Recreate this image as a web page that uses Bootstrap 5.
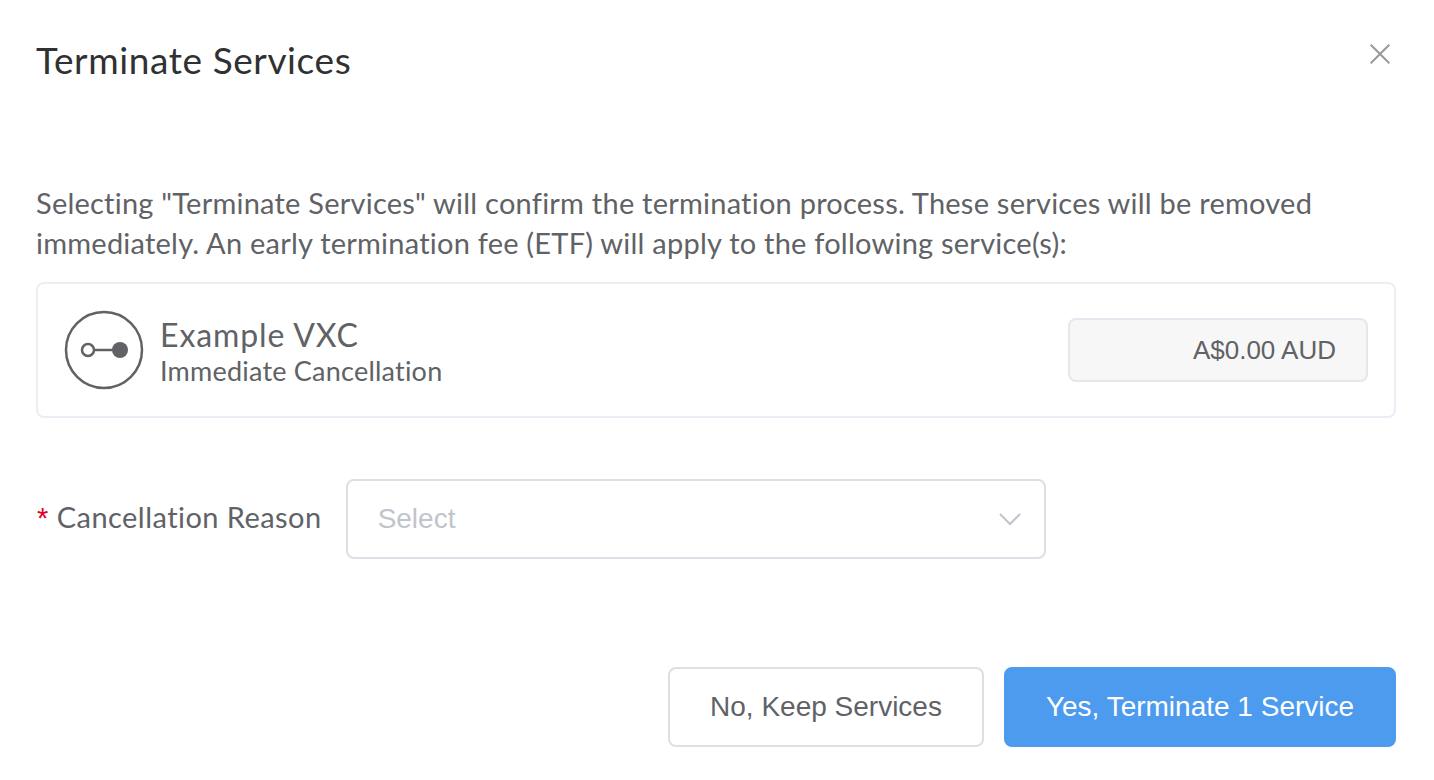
<!DOCTYPE html>
<html lang="en"><head><meta charset="utf-8"><title>Terminate Services</title>
<link rel="stylesheet" href="https://cdn.jsdelivr.net/npm/bootstrap@5.3.0/dist/css/bootstrap.min.css">
<style>
html,body{height:100%;background:#fff}
body{font-family:"Lato","Open Sans",sans-serif;color:#606266;font-size:28px;line-height:40px;overflow:hidden}
.dlg{padding:35px 38px 33px 36px;height:780px;display:flex;flex-direction:column}
.dlg-title{font-size:37px;line-height:50px;letter-spacing:.6px;color:#303133;margin:0;font-weight:400}
.dlg-close{background:none;border:0;padding:0;width:20px;height:20px;line-height:0;margin-top:9px;margin-right:6px}
.dlg-msg{margin:98px 0 0;font-size:29px;line-height:40px;letter-spacing:.23px}
.svc{border:2px solid #ebeef5;border-radius:8px;height:136px;margin-top:19px;padding:0 26px}
.svc-name{font-size:32px;line-height:36px;letter-spacing:.9px;margin-top:6px}
.svc-sub{font-size:27px;line-height:36px;letter-spacing:.22px}
.price{width:300px;height:64px;background:#f7f7f7;border:2px solid #e4e7ed;border-radius:8px;font-family:"Liberation Sans",sans-serif;font-size:26px;padding:0 30px}
.lbl{font-size:29px;letter-spacing:.45px;margin-right:24px;margin-bottom:3px;white-space:nowrap}
.req{color:#e1002a;font-family:"Liberation Sans",sans-serif;margin-left:1px;margin-right:8px}
.sel{width:700px;height:80px;border:2px solid #dcdfe6;border-radius:8px;padding:0 23px 0 30px;font-family:"Liberation Sans",sans-serif;color:#c0c4cc;font-size:28px}
.form-line{margin-top:61px}
.btn-a,.btn-b{height:80px;border-radius:8px;font-family:"Liberation Sans",sans-serif;font-size:28px;padding:0}
.btn-a{width:316px;background:#fff;border:2px solid #dcdfe6;color:#606266}
.btn-b{width:392px;background:#4d9bef;border:2px solid #4d9bef;color:#fff}
.foot{margin-top:auto;gap:20px}
</style></head><body>
<div class="dlg">
<div class="d-flex justify-content-between align-items-start">
<h1 class="dlg-title">Terminate Services</h1>
<button class="dlg-close" aria-label="Close"><svg width="20" height="20" viewBox="0 0 20 20"><path d="M.7.7 19.3 19.3M19.3.7.7 19.3" stroke="#999" stroke-width="2" fill="none"/></svg></button>
</div>
<p class="dlg-msg">Selecting "Terminate Services" will confirm the termination process. These services will be removed immediately. An early termination fee (ETF) will apply to the following service(s):</p>
<div class="svc d-flex align-items-center justify-content-between">
<div class="d-flex align-items-center gap-3">
<svg width="80" height="80" viewBox="0 0 80 80"><circle cx="40" cy="40" r="38" fill="none" stroke="#606266" stroke-width="2.5"/><circle cx="24" cy="40" r="6" fill="none" stroke="#606266" stroke-width="2.5"/><path d="M30 40H50" stroke="#606266" stroke-width="2.5"/><circle cx="56" cy="40" r="8" fill="#606266"/></svg>
<div><div class="svc-name">Example VXC</div><div class="svc-sub">Immediate Cancellation</div></div>
</div>
<div class="price d-flex align-items-center justify-content-end">A$0.00 AUD</div>
</div>
<div class="form-line d-flex align-items-center">
<label class="lbl"><span class="req">*</span>Cancellation Reason</label>
<div class="sel d-flex align-items-center justify-content-between"><span>Select</span><svg width="22" height="14" viewBox="0 0 22 14"><path d="M1 2 11 12 21 2" fill="none" stroke="#c0c4cc" stroke-width="2"/></svg></div>
</div>
<div class="foot d-flex justify-content-end">
<button class="btn-a">No, Keep Services</button>
<button class="btn-b">Yes, Terminate 1 Service</button>
</div>
</div>
</body></html>
